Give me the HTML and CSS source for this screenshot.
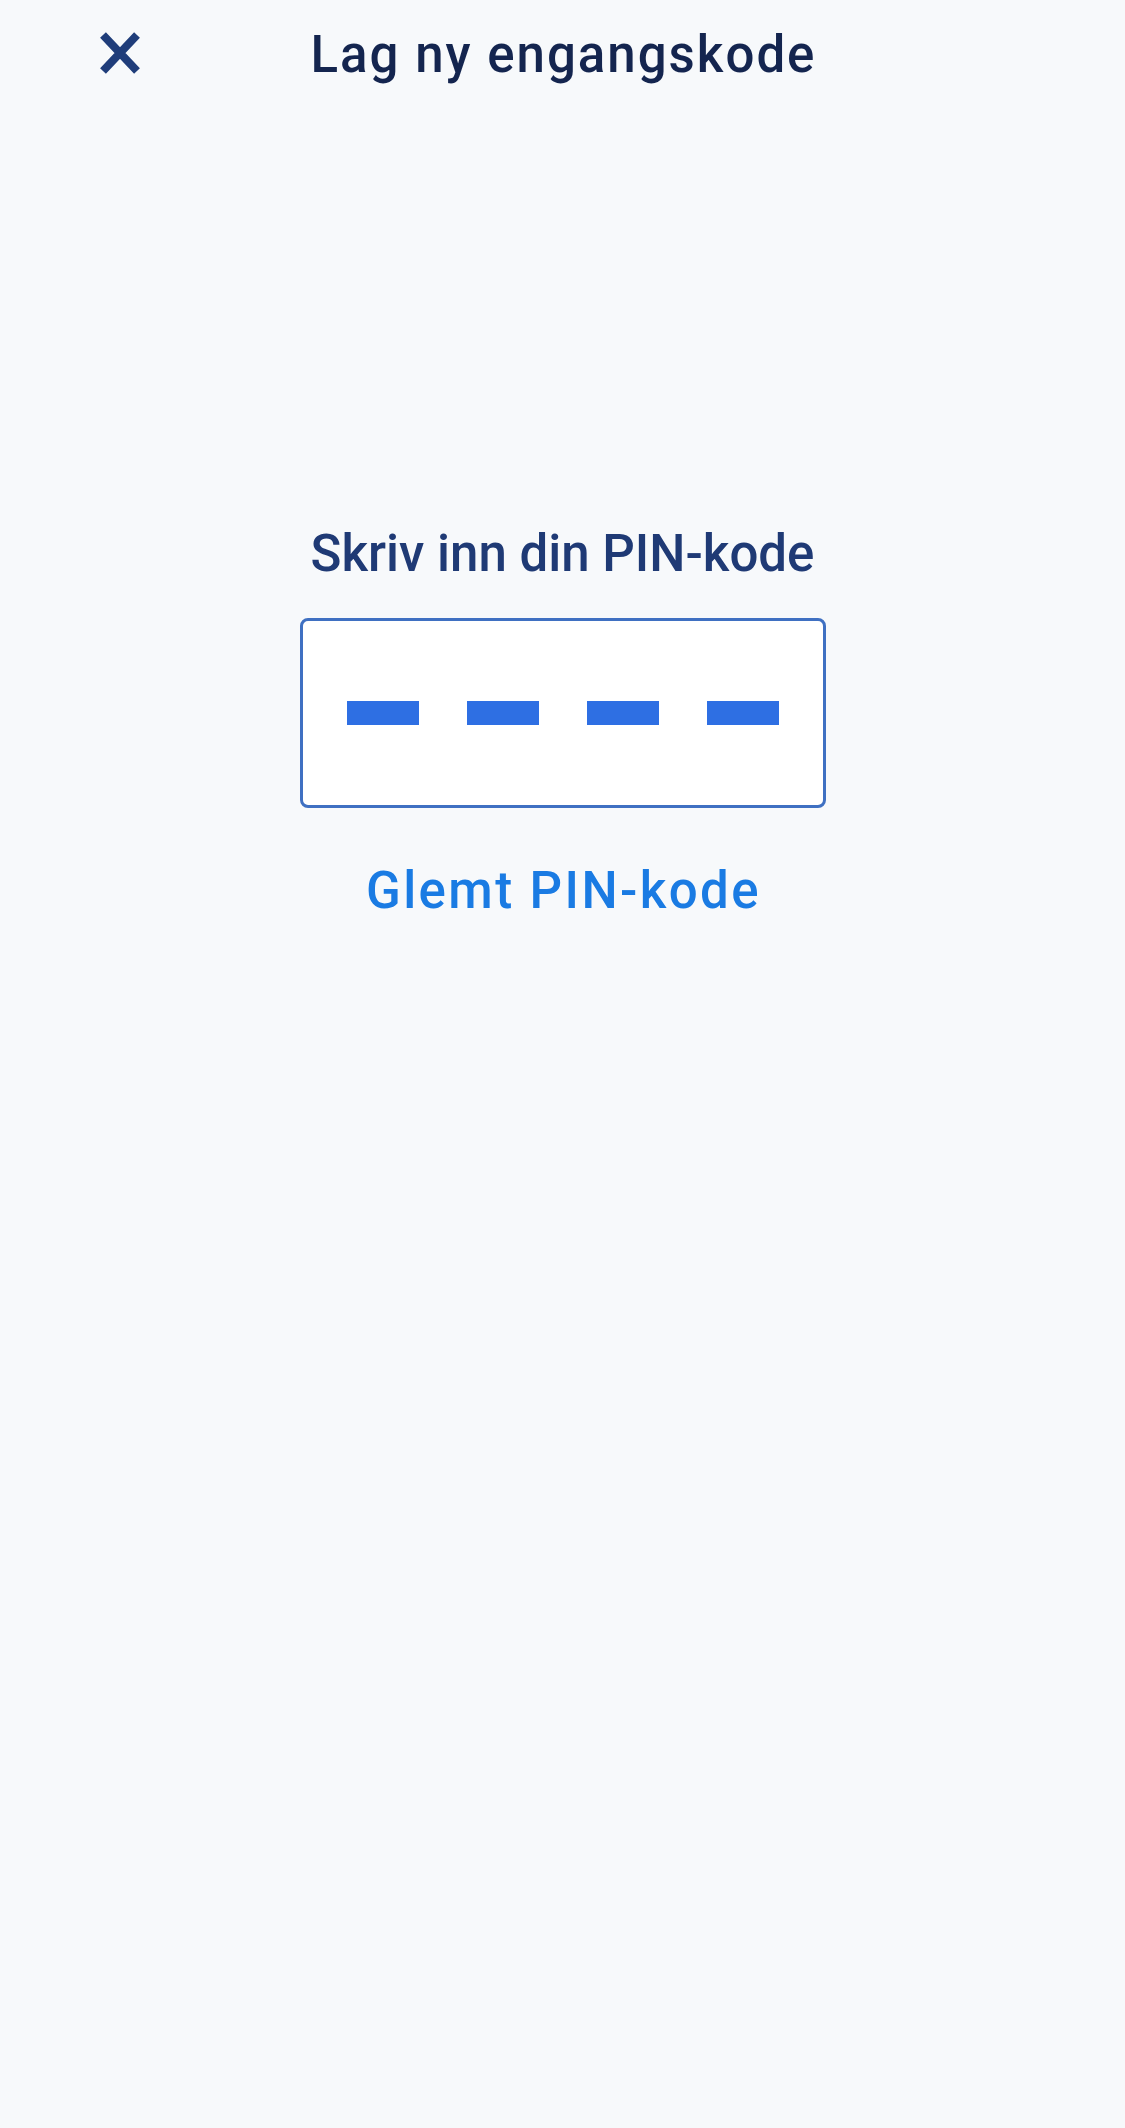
FILE: index.html
```html
<!DOCTYPE html>
<html lang="no">
<head>
  <meta charset="UTF-8" />
  <meta name="viewport" content="width=device-width, initial-scale=1" />
  <title>Lag ny engangskode</title>
  <link rel="stylesheet" href="styles.css">
</head>
<body>
  <header class="topbar">
    <button class="closeBtn" aria-label="Lukk">
      <svg width="44" height="44" viewBox="0 0 44 44" aria-hidden="true">
        <path d="M5 4 L39 40 M39 4 L5 40" stroke="#1f3d7a" stroke-width="8" fill="none" />
      </svg>
    </button>
    <h1 class="title">Lag ny engangskode</h1>
    <span></span>
  </header>

  <main class="pinSection">
    <h2 class="pinLabel">Skriv inn din PIN-kode</h2>
    <div class="pinBox">
      <span class="pinDash"></span>
      <span class="pinDash"></span>
      <span class="pinDash"></span>
      <span class="pinDash"></span>
    </div>
    <a class="forgotLink" href="#">Glemt PIN-kode</a>
  </main>
</body>
</html>
```
FILE: styles.css
```css
/* Basic Reset */
* {
  box-sizing: border-box;
  margin: 0;
  padding: 0;
}
body {
  font-family: Roboto, "Liberation Sans", sans-serif;
  font-weight: 500;
  background-color: #f7f9fb;
  min-height: 100vh;
}
.topbar {
  display: grid;
  grid-template-columns: 1fr auto 1fr;
  align-items: center;
  padding-top: 25px;
}
.closeBtn {
  justify-self: start;
  margin-left: 98px;
  margin-top: -4px;
  width: 44px;
  height: 44px;
  background: none;
  border: none;
  cursor: pointer;
}
.closeBtn svg {
  display: block;
}
.title {
  font-size: 51px;
  font-weight: 500;
  line-height: 60px;
  letter-spacing: 2px;
  margin-right: -2px;
  color: #14254f;
}
.pinSection {
  display: flex;
  flex-direction: column;
  align-items: center;
  margin-top: 439px;
}
.pinLabel {
  font-size: 51px;
  font-weight: 500;
  line-height: 60px;
  color: #1f3a75;
}
.pinBox {
  margin-top: 34px;
  width: 526px;
  height: 190px;
  background-color: #fff;
  border: 3px solid #3f70c2;
  border-radius: 8px;
  display: flex;
  align-items: center;
  justify-content: center;
  gap: 48px;
}
.pinDash {
  width: 72px;
  height: 24px;
  background-color: #2e6fe3;
}
.forgotLink {
  margin-top: 53px;
  margin-right: -2px;
  font-size: 51px;
  line-height: 60px;
  letter-spacing: 2.4px;
  color: #1a7be3;
  text-decoration: none;
}
```
